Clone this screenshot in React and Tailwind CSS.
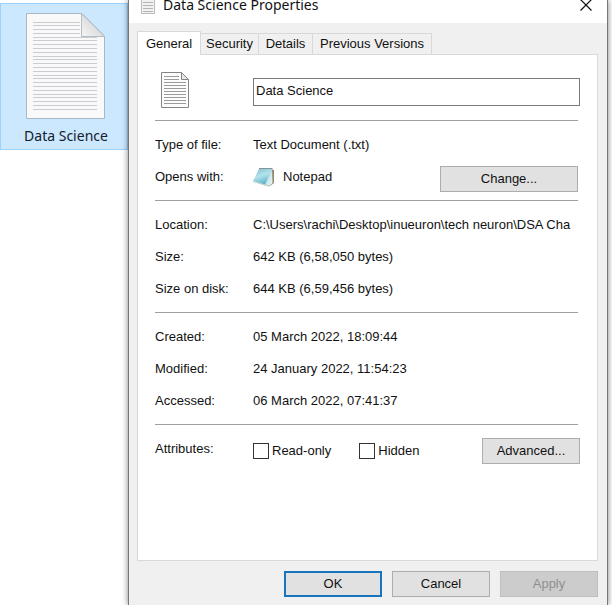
import React from "react";

function PageLines({ count, x1, x2, top, gap, short, color }) {
  return Array.from({ length: count }, (_, i) => (
    <line
      key={i}
      x1={x1}
      x2={i * gap < short.height ? short.x2 : x2}
      y1={Math.floor(top + i * gap) + 0.5}
      y2={Math.floor(top + i * gap) + 0.5}
      stroke={color}
      strokeWidth="1"
    />
  ));
}

function LargeDocument() {
  return (
    <svg className="block" width="80" height="107" viewBox="0 0 80 107" aria-hidden="true">
      <defs>
        <linearGradient id="fold" x1="0" y1="1" x2="1" y2="0">
          <stop offset="0" stopColor="#f6f6f6" />
          <stop offset="0.5" stopColor="#dedede" />
          <stop offset="1" stopColor="#f4f4f4" />
        </linearGradient>
      </defs>
      <path d="M.5.5H56L78.500 23V105.500H.5Z" fill="#f9f9f9" stroke="#a7b9c7" />
      <PageLines count={24} x1={7} x2={71} top={9} gap={3.79} short={{ height: 14, x2: 54 }} color="#c9cdd1" />
      <path d="M55.500.5V23.500H78.500Z" fill="url(#fold)" stroke="#b5bdc4" />
    </svg>
  );
}

function SmallDocument() {
  return (
    <svg className="block" width="29" height="37" viewBox="0 0 29 37" aria-hidden="true">
      <path d="M.5.5H20.500L27.500 7.500V35.500H.5Z" fill="#fcfcfc" stroke="#858585" />
      <PageLines count={10} x1={3} x2={25} top={4} gap={3} short={{ height: 5, x2: 18 }} color="#9b9b9b" />
      <path d="M20.500.5V7.500H27.500Z" fill="#e8e8e8" stroke="#858585" />
    </svg>
  );
}

function TitleDocument() {
  return (
    <svg className="block shrink-0" width="14" height="18" viewBox="0 0 14 18" aria-hidden="true">
      <rect x=".5" y=".5" width="13" height="17" fill="#f1f1f1" stroke="#bcbcbc" />
      {[3, 6, 9, 12, 15].map((y) => (
        <path key={y} d={`M2 ${y}.500H12`} stroke="#b4b4b4" />
      ))}
    </svg>
  );
}

function NotepadIcon() {
  return (
    <svg className="block" width="22" height="20" viewBox="0 0 22 20" aria-hidden="true">
      <defs>
        <linearGradient id="pad" x1="0.3" y1="0" x2="0.7" y2="1">
          <stop offset="0" stopColor="#8cc4d3" />
          <stop offset="0.4" stopColor="#b4e3ec" />
          <stop offset="1" stopColor="#4ba7bf" />
        </linearGradient>
        <linearGradient id="page" x1="0" y1="0" x2="1" y2="1">
          <stop offset="0" stopColor="#a5d3dd" />
          <stop offset="1" stopColor="#eef7f8" />
        </linearGradient>
      </defs>
      <path d="M18 2L21 3V16L17 19L13 18Z" fill="#938b70" />
      <path d="M6 2L19 2L13 18L0 14Z" fill="url(#pad)" />
      <path d="M19 2.500L19.500 16L17 18.500L12 17.500Z" fill="url(#page)" />
      <path d="M6 1.500H19.500" stroke="#82969b" />
      <path d="M0 14.500L13 18.500L17 19" stroke="#c3d0d0" fill="none" />
    </svg>
  );
}

function Row({ label, children }) {
  return (
    <div className="flex h-8 items-center">
      <dt className="w-[98px] shrink-0">{label}</dt>
      <dd className="flex min-w-0 flex-1 items-center overflow-hidden whitespace-nowrap">{children}</dd>
    </div>
  );
}

function Section({ children }) {
  return (
    <>
      <hr className="mr-0.5 border-[#a0a0a0]" />
      <dl className="pt-2 pb-[7px]">{children}</dl>
    </>
  );
}

function PushButton({ className, children, ...rest }) {
  return (
    <button
      type="button"
      className={`h-[26px] shrink-0 border text-center ${className}`}
      {...rest}
    >
      {children}
    </button>
  );
}

function CheckBox({ id, label }) {
  return (
    <label htmlFor={id} className="flex items-center gap-[3px]">
      <input
        id={id}
        type="checkbox"
        className="size-4 appearance-none border border-[#333] bg-white checked:bg-[#0078d7]"
      />
      {label}
    </label>
  );
}

function Tab({ children, className = "" }) {
  return (
    <button
      type="button"
      role="tab"
      aria-selected="false"
      className={`h-[21px] border-t border-r border-[#d9d9d9] bg-[#f0f0f0] text-center ${className}`}
    >
      {children}
    </button>
  );
}

export default function App() {
  return (
    <div className="flex min-h-screen overflow-hidden bg-white font-['Liberation_Sans',Arial,sans-serif] text-[13px] leading-4 text-[#111]">
      <aside className="w-32 shrink-0 pt-[3px]">
        <figure className="flex h-[147px] flex-col items-center border border-[#99d1ff] bg-[#cce8ff] pt-[9px] pl-1">
          <LargeDocument />
          <figcaption className="mt-1.5 font-['Noto_Sans','Open_Sans',sans-serif] text-sm leading-5 whitespace-nowrap text-[#14202b]">
            Data Science
          </figcaption>
        </figure>
      </aside>

      <main className="mr-1 flex min-w-0 flex-1 flex-col border-x border-[#777] bg-[#f0f0f0] shadow-[0_0_6px_rgba(0,0,0,0.5)]">
        <header className="flex h-[23px] items-start bg-white pr-[11px] pl-3">
          <div className="flex h-[10px] flex-1 items-center gap-2">
            <TitleDocument />
            <h1 className="font-['Noto_Sans','Open_Sans',sans-serif] text-sm leading-4">Data Science Properties</h1>
          </div>
          <button type="button" aria-label="Close" className="flex h-[10px] w-5 items-center justify-center">
            <svg className="block shrink-0" width="12" height="12" viewBox="0 0 12 12" aria-hidden="true">
              <path d="M.5.5L11.500 11.500M11.500.5L.5 11.500" stroke="#111" strokeWidth="1.200" />
            </svg>
          </button>
        </header>

        <div role="tablist" className="mt-2 ml-2 flex items-end">
          <button
            type="button"
            role="tab"
            aria-selected="true"
            className="z-10 -mb-px h-6 w-16 border border-b-0 border-[#d9d9d9] bg-white text-center"
          >
            General
          </button>
          <Tab className="w-[58px]">Security</Tab>
          <Tab className="w-[54px]">Details</Tab>
          <Tab className="w-[119px]">Previous Versions</Tab>
        </div>

        <section className="mr-[9px] ml-2 h-[507px] border border-[#d9d9d9] bg-white pt-[17px] pr-[17px] pl-[17px]">
          <div className="flex h-12 items-start">
            <div className="w-[98px] shrink-0 pl-1.5">
              <SmallDocument />
            </div>
            <input
              type="text"
              aria-label="File name"
              defaultValue="Data Science"
              className="mt-1.5 h-7 min-w-0 flex-1 border border-[#7a7a7a] bg-white px-0.5 pb-1 outline-none"
            />
          </div>

          <Section>
            <Row label="Type of file:">Text Document (.txt)</Row>
            <Row label="Opens with:">
              <NotepadIcon />
              <span className="ml-2 flex-1">Notepad</span>
              <PushButton className="mt-1 mr-0.5 w-[138px] border-[#adadad] bg-[#e1e1e1]">Change...</PushButton>
            </Row>
          </Section>

          <Section>
            <Row label="Location:">C:\Users\rachi\Desktop\inueuron\tech neuron\DSA Cha</Row>
            <Row label="Size:">642 KB (6,58,050 bytes)</Row>
            <Row label="Size on disk:">644 KB (6,59,456 bytes)</Row>
          </Section>

          <Section>
            <Row label="Created:">05 March 2022, 18:09:44</Row>
            <Row label="Modified:">24 January 2022, 11:54:23</Row>
            <Row label="Accessed:">06 March 2022, 07:41:37</Row>
          </Section>

          <Section>
            <Row label="Attributes:">
              <div className="flex flex-1 items-center gap-7 pt-1">
                <CheckBox id="read-only" label="Read-only" />
                <CheckBox id="hidden" label="Hidden" />
              </div>
              <PushButton className="mt-1 w-[98px] border-[#adadad] bg-[#e1e1e1]">Advanced...</PushButton>
            </Row>
          </Section>
        </section>

        <footer className="mt-2.5 mr-[9px] flex justify-end gap-2.5 pb-2">
          <PushButton className="w-[98px] border-2 border-[#1874bd] bg-[#e1e1e1]">OK</PushButton>
          <PushButton className="w-[98px] border-[#adadad] bg-[#e1e1e1]">Cancel</PushButton>
          <PushButton disabled className="w-[98px] border-[#bfbfbf] bg-[#cccccc] text-[#8f8f8f]">
            Apply
          </PushButton>
        </footer>
      </main>
    </div>
  );
}
